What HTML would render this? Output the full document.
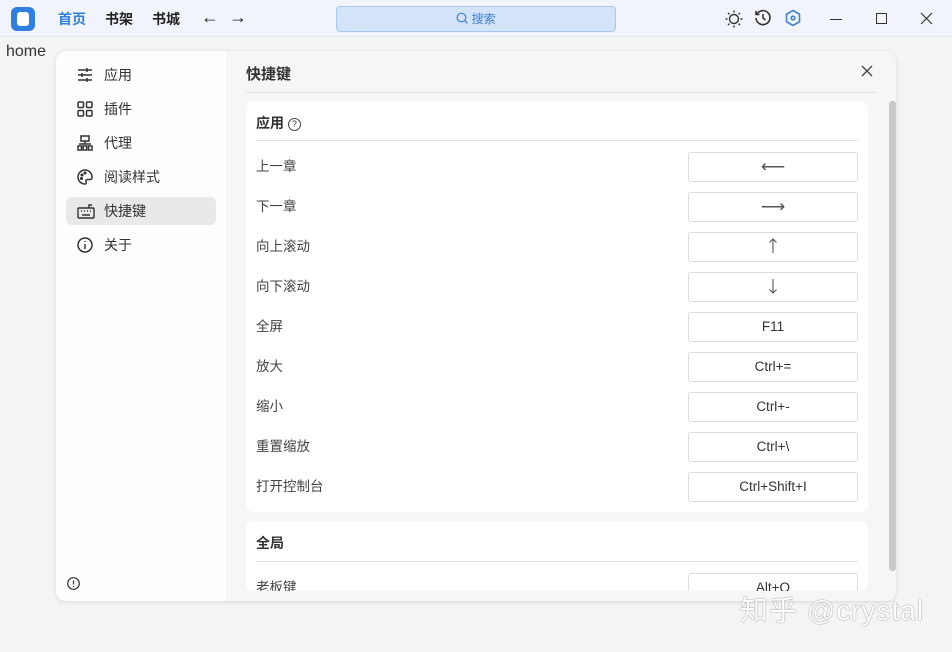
<!DOCTYPE html>
<html><head><meta charset="utf-8"><style>
*{box-sizing:border-box;margin:0;padding:0}
body{width:952px;height:652px;overflow:hidden;background:#f4f4f4;font-family:"Liberation Sans","Noto Sans CJK SC",sans-serif;color:#333;position:relative}
.top{position:absolute;left:0;top:0;width:952px;height:37px;background:#f1f5fb;border-bottom:1px solid #e6e9ee}
.logo{position:absolute;left:11px;top:7px;width:24px;height:24px;border-radius:6px;background:#2f7fe0}
.logo:after{content:"";position:absolute;left:6px;top:5px;width:12px;height:14px;border-radius:3px;background:#fff}
.nav{position:absolute;top:9px;font-size:14px;font-weight:bold;color:#222}
.search{position:absolute;left:336px;top:6px;width:280px;height:26px;border:1px solid #a9c6ec;border-radius:4px;background:#d4e4f8;color:#3d7fd6;font-size:12px;text-align:center;line-height:24px}
.home{position:absolute;left:6px;top:43px;font-size:16px;color:#333}
.dlg{position:absolute;left:56px;top:51px;width:840px;height:550px;border-radius:10px;background:#f6f6f6;box-shadow:0 1px 4px rgba(0,0,0,.12);overflow:hidden}
.side{position:absolute;left:0;top:0;width:170px;height:550px;background:#fdfdfd}
.mi{position:absolute;left:10px;width:150px;height:28px;border-radius:6px;font-size:14px;line-height:28px;padding-left:38px;color:#333}
.mi svg{position:absolute;left:11px;top:6px}
.card{position:absolute;left:190px;width:622px;background:#fff;border-radius:8px}
.row{position:absolute;left:10px;width:602px;height:30px;font-size:13.5px;line-height:30px;color:#444}
.key{position:absolute;right:0;top:0;width:170px;height:30px;border:1px solid #ddd;border-radius:3px;text-align:center;font-size:13.5px;line-height:28px;color:#333}
.ar{font-size:17px;color:#555}
</style></head><body>
<div class="top">
<div class="logo"></div>
<div class="nav" style="left:58px;color:#2f7fe0">首页</div>
<div class="nav" style="left:105px">书架</div>
<div class="nav" style="left:152px">书城</div>
<div class="nav" style="left:201px;font-weight:normal;font-size:18px;top:7px">←</div>
<div class="nav" style="left:229px;font-weight:normal;font-size:18px;top:7px">→</div>
<div class="search"><svg width="12" height="12" style="vertical-align:-1px" fill="none" stroke="#3d7fd6" stroke-width="1.2"><circle cx="5.5" cy="5.5" r="4.3"/><path d="M8.6 8.6l2.8 2.8"/></svg> 搜索</div>
<svg style="position:absolute;left:724px;top:9px" width="20" height="20" viewBox="0 0 20 20" fill="none" stroke="#333" stroke-width="1.4"><circle cx="10" cy="10" r="4.5"/><path d="M10 1.5v2M10 16.5v2M1.5 10h2M16.5 10h2M4 4l1.4 1.4M14.6 14.6L16 16M4 16l1.4-1.4M14.6 5.4L16 4"/></svg>
<svg style="position:absolute;left:754px;top:9px" width="18" height="18" viewBox="0 0 18 18" fill="none" stroke="#333" stroke-width="1.6"><path d="M3 5A7 7 0 1 1 2 9"/><path d="M2 2v3.5h3.5M9 5v4l2.5 2"/></svg>
<svg style="position:absolute;left:784px;top:9px" width="18" height="18" viewBox="0 0 18 18" fill="none" stroke="#3d80d6" stroke-width="1.6"><path d="M9 1.5l6.5 3.75v7.5L9 16.5l-6.5-3.75v-7.5z"/><circle cx="9" cy="9" r="1.8"/></svg>
<div style="position:absolute;left:830px;top:19px;width:12px;height:1px;background:#333"></div>
<div style="position:absolute;left:876px;top:13px;width:11px;height:11px;border:1px solid #333"></div>
<svg style="position:absolute;left:920px;top:12px" width="13" height="13" stroke="#333" stroke-width="1.2"><path d="M1 1l11 11M12 1L1 12"/></svg>
</div>
<div class="home">home</div>
<div class="dlg">
<div class="side">
<div class="mi" style="top:10px"><svg width="16" height="16" fill="none" stroke="#333" stroke-width="1.5"><path d="M1 3h14M1 8h14M1 13h14M10 1v4M5 6v4M10 11v4"/></svg>应用</div>
<div class="mi" style="top:44px"><svg width="16" height="16" fill="none" stroke="#333" stroke-width="1.5"><rect x="1" y="1" width="5.5" height="5.5" rx="1"/><rect x="9.5" y="1" width="5.5" height="5.5" rx="1"/><rect x="1" y="9.5" width="5.5" height="5.5" rx="1"/><rect x="9.5" y="9.5" width="5.5" height="5.5" rx="1"/></svg>插件</div>
<div class="mi" style="top:78px"><svg width="16" height="16" fill="none" stroke="#333" stroke-width="1.5"><rect x="4" y="1" width="8" height="5"/><path d="M8 6v3M2 9h12"/><rect x="1" y="11" width="3.5" height="4"/><rect x="6.2" y="11" width="3.5" height="4"/><rect x="11.5" y="11" width="3.5" height="4"/></svg>代理</div>
<div class="mi" style="top:112px"><svg width="16" height="16" fill="none" stroke="#333" stroke-width="1.5"><path d="M8 1a7 7 0 1 0 0 14c1.5 0 1.5-1.5 1-2.5s0-2 1.5-2H13a2 2 0 0 0 2-2A7 7 0 0 0 8 1z"/><circle cx="5" cy="6" r=".8"/><circle cx="8" cy="4" r=".8"/><circle cx="4.5" cy="9.5" r=".8"/></svg>阅读样式</div>
<div class="mi" style="top:146px;background:#e9e9e9"><svg width="18" height="16" fill="none" stroke="#333" stroke-width="1.4"><rect x="1" y="5" width="16" height="10" rx="1"/><path d="M4 8h1M7 8h1M10 8h1M13 8h1M5 12h8M12 5V2h3"/></svg>快捷键</div>
<div class="mi" style="top:180px"><svg width="16" height="16" fill="none" stroke="#333" stroke-width="1.5"><circle cx="8" cy="8" r="7"/><path d="M8 7v5M8 4v1"/></svg>关于</div>
<svg style="position:absolute;left:11px;top:526px" width="13" height="13" fill="none" stroke="#333" stroke-width="1.2"><circle cx="6.5" cy="6.5" r="5.8"/><path d="M6.5 3.5v4M6.5 9v1"/></svg>
</div>
<div style="position:absolute;left:190px;top:12px;font-size:15px;font-weight:bold;color:#333">快捷键</div>
<svg style="position:absolute;left:805px;top:14px" width="12" height="12" stroke="#444" stroke-width="1.3"><path d="M1 1l10 10M11 1L1 11"/></svg>
<div style="position:absolute;left:190px;top:41px;width:630px;height:1px;background:#e2e2e2"></div>
<div style="position:absolute;left:833px;top:50px;width:7px;height:470px;background:#c9c9c9;border-radius:3px"></div>
<div class="card" style="top:50px;height:411px">
<div style="position:absolute;left:10px;top:12px;font-size:14px;font-weight:bold">应用 <span style="display:inline-block;width:13px;height:13px;border:1.2px solid #444;border-radius:50%;font-size:9px;line-height:11px;text-align:center;vertical-align:1px;font-weight:normal">?</span></div>
<div style="position:absolute;left:10px;top:39px;width:602px;height:1px;background:#e2e2e2"></div>
<div class="row" style="top:51px">上一章<div class="key"><span class="ar">⟵</span></div></div>
<div class="row" style="top:91px">下一章<div class="key"><span class="ar">⟶</span></div></div>
<div class="row" style="top:131px">向上滚动<div class="key"><svg width="10" height="16" style="vertical-align:-3px" fill="none" stroke="#555" stroke-width="1.1"><path d="M5 15V1M1.5 4.5L5 1l3.5 3.5"/></svg></div></div>
<div class="row" style="top:171px">向下滚动<div class="key"><svg width="10" height="16" style="vertical-align:-3px" fill="none" stroke="#555" stroke-width="1.1"><path d="M5 1v14M1.5 11.5L5 15l3.5-3.5"/></svg></div></div>
<div class="row" style="top:211px">全屏<div class="key">F11</div></div>
<div class="row" style="top:251px">放大<div class="key">Ctrl+=</div></div>
<div class="row" style="top:291px">缩小<div class="key">Ctrl+-</div></div>
<div class="row" style="top:331px">重置缩放<div class="key">Ctrl+\</div></div>
<div class="row" style="top:371px">打开控制台<div class="key">Ctrl+Shift+I</div></div>
</div>
<div class="card" style="top:470px;height:70px;overflow:hidden">
<div style="position:absolute;left:10px;top:12px;font-size:14px;font-weight:bold">全局</div>
<div style="position:absolute;left:10px;top:40px;width:602px;height:1px;background:#e2e2e2"></div>
<div class="row" style="top:52px">老板键<div class="key">Alt+Q</div></div>
</div>
</div>
<div style="position:absolute;left:740px;top:589px;font-size:28px;letter-spacing:1px;color:#fff;text-shadow:0 0 1px #888,0 0 1px #888">知乎 @crystal</div>
</body></html>
